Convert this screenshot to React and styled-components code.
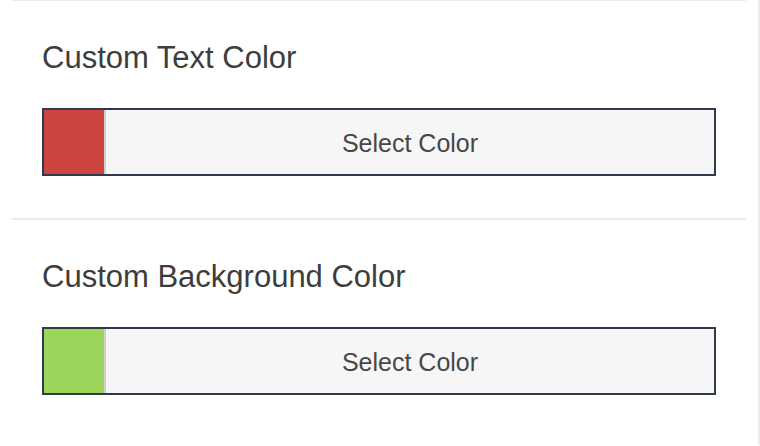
import React from 'react';
import styled, { createGlobalStyle } from 'styled-components';

const GlobalStyle = createGlobalStyle`
  html, body {
    margin: 0;
    padding: 0;
    background: #fff;
    overflow: hidden;
  }
  body {
    font-family: 'Liberation Sans', Arial, sans-serif;
  }
`;

const Panel = styled.div`
  box-sizing: border-box;
  width: 760px;
  min-height: 100vh;
  margin-top: -1px;
  padding: 0 12px;
  border-right: 2px solid #ececec;
`;

const Section = styled.section`
  border-top: 2px solid #ebebeb;
  padding: 42px 30px 42px;
`;

const Title = styled.h3`
  margin: 0 0 35px;
  font-size: 31px;
  line-height: 30px;
  font-weight: 400;
  color: #3d3d3d;
`;

const Picker = styled.button`
  box-sizing: border-box;
  display: flex;
  width: 100%;
  height: 68px;
  padding: 0;
  border: 2px solid #2f3b4d;
  background: #f6f6f6;
  cursor: pointer;
  font-family: inherit;
`;

const Swatch = styled.span`
  width: 60px;
  flex: none;
  background: ${p => p.color};
  border-right: 2px solid #cfcfcf;
`;

const Label = styled.span`
  flex: 1;
  display: flex;
  align-items: center;
  justify-content: center;
  padding-top: 3px;
  font-size: 25px;
  color: #474747;
`;

const fields = [
  { title: 'Custom Text Color', color: '#cc4540' },
  { title: 'Custom Background Color', color: '#9bd65a' },
];

export default function App() {
  return (
    <>
      <GlobalStyle />
      <Panel>
        {fields.map(f => (
          <Section key={f.title}>
            <Title>{f.title}</Title>
            <Picker type="button">
              <Swatch color={f.color} />
              <Label>Select Color</Label>
            </Picker>
          </Section>
        ))}
      </Panel>
    </>
  );
}
